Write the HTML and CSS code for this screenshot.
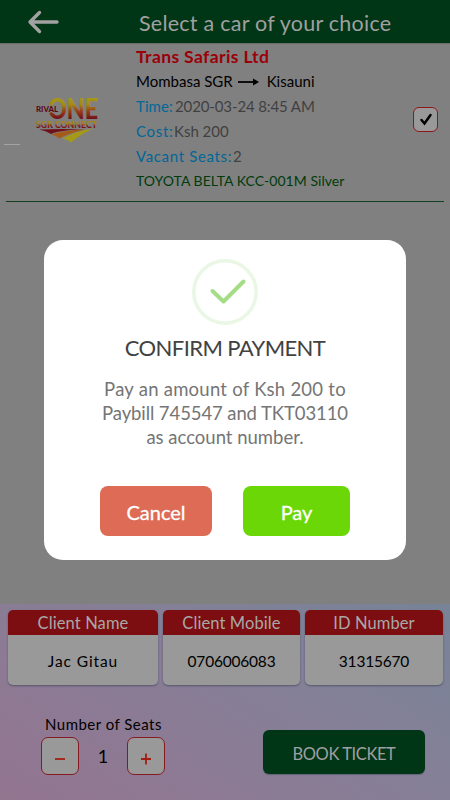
FILE: index.html
```html
<!DOCTYPE html>
<html lang="en">
<head>
<meta charset="utf-8">
<title>Select a car of your choice</title>
<link rel="stylesheet" href="styles.css">
</head>
<body>
<div class="screen">
  <header class="topbar">
    <svg class="back" width="34" height="24" viewBox="0 0 34 24"><path d="M4 12H30M12.500 2.500L3 12L12.500 21.500" /></svg>
    <h1>Select a car of your choice</h1>
  </header>
  <main class="list">
    <article class="trip">
      <div class="brand">
        <svg class="logo" width="66" height="50" viewBox="0 0 66 50">
          <defs>
            <linearGradient id="one" gradientUnits="userSpaceOnUse" x1="0" y1="2" x2="0" y2="24"><stop offset="0" stop-color="#a59a18"/><stop offset=".35" stop-color="#a58b14"/><stop offset=".62" stop-color="#9b4315"/><stop offset="1" stop-color="#701018"/></linearGradient>
            <linearGradient id="sgr" gradientUnits="userSpaceOnUse" x1="0" y1="25" x2="0" y2="33"><stop offset="0" stop-color="#a58b14"/><stop offset=".5" stop-color="#a57b14"/><stop offset=".65" stop-color="#8c2d16"/><stop offset="1" stop-color="#701018"/></linearGradient>
          </defs>
          <text class="logo-one" x="14" y="23.500" textLength="50" lengthAdjust="spacingAndGlyphs" fill="url(#one)">ONE</text>
          <text class="logo-rival" x="2" y="17" textLength="22" lengthAdjust="spacingAndGlyphs">RIVAL</text>
          <text class="logo-sgr" x="2" y="32.500" textLength="61" lengthAdjust="spacingAndGlyphs" fill="url(#sgr)">SGR CONNECT</text>
          <path fill="#701018" d="M5 34.500Q27 33.500 51 34.500Q25 35 17 39Q12 35.500 5 34.500Z"/>
          <path fill="#a45a18" d="M17 39.500Q34 34.500 52 34.500Q38 37 25 43.500Q23 41 17 39.500Z"/>
          <path fill="#a59a18" d="M28 44Q40 36.500 59 33.500Q47 39 37 47.500Q34 44 28 44Z"/>
        </svg>
        <span class="dash"></span>
      </div>
      <div class="info">
        <p class="company">Trans Safaris Ltd</p>
        <p class="route"><span>Mombasa SGR</span><svg class="arrow" width="21" height="8" viewBox="0 0 21 8"><path d="M0 4H17" stroke="#000" stroke-width="1.800"/><path d="M15 .5L21 4L15 7.500Z"/></svg><span>Kisauni</span></p>
        <p class="row"><b class="t-time">Time:</b><span class="t-date">2020-03-24 8:45 AM</span></p>
        <p class="row"><b class="t-cost">Cost:</b><span class="t-ksh">Ksh 200</span></p>
        <p class="row"><b class="t-vacant">Vacant Seats:</b><span class="t-two">2</span></p>
        <p class="car">TOYOTA BELTA KCC-001M Silver</p>
      </div>
      <div class="check"><svg width="14" height="14" viewBox="0 0 14 14"><path d="M2.500 7L5.500 10.500L11.500 2"/></svg></div>
    </article>
  </main>
  <footer class="booking">
    <div class="cards">
      <section class="card"><h2>Client Name</h2><p class="t-jac">Jac Gitau</p></section>
      <section class="card"><h2 class="t-mobile">Client Mobile</h2><p class="t-phone">0706006083</p></section>
      <section class="card"><h2>ID Number</h2><p class="t-idnum">31315670</p></section>
    </div>
    <div class="actions">
      <div class="seats">
        <p class="seats-label">Number of Seats</p>
        <div class="stepper">
          <button class="step"><svg width="12" height="12" viewBox="0 0 12 12"><path d="M1 6H11"/></svg></button>
          <span class="count">1</span>
          <button class="step"><svg width="12" height="12" viewBox="0 0 12 12"><path d="M1 6H11M6 .5V11.500"/></svg></button>
        </div>
      </div>
      <button class="book">BOOK TICKET</button>
    </div>
  </footer>
  <div class="dialog">
    <svg class="success" width="66" height="66" viewBox="0 0 66 66"><circle cx="33" cy="33" r="31.200"/><path d="M20.500 32L31.500 42.500L51.500 22.500"/></svg>
    <h3>CONFIRM PAYMENT</h3>
    <p class="message"><span class="t-m1">Pay an amount of Ksh 200 to</span><br><span class="t-m2">Paybill 745547 and TKT03110</span><br><span class="t-m3">as account number.</span></p>
    <div class="buttons">
      <button class="cancel">Cancel</button>
      <button class="pay">Pay</button>
    </div>
  </div>
</div>
</body>
</html>
```
FILE: styles.css
```css
* { box-sizing: border-box; margin: 0; padding: 0; }
body { width: 450px; height: 800px; overflow: hidden; font-family: Lato, "Open Sans", sans-serif; background: #808080; }
button { font: inherit; border: 0; display: flex; align-items: center; justify-content: center; }
span, b { white-space: nowrap; }
svg { display: block; flex: none; overflow: visible; }
.screen { position: relative; width: 450px; height: 800px; display: flex; flex-direction: column; }
.topbar { height: 43px; background: #003516; display: flex; align-items: center; padding-left: 27px; box-shadow: 0 1px 1px #6d6d6d; }
.back { fill: none; stroke: #a2a2a2; stroke-width: 3.4; stroke-linecap: round; stroke-linejoin: round; }
h1 { font-size: 21.5px; font-weight: 400; letter-spacing: .24px; color: #a0a0a0; margin-left: 78px; line-height: 43px; padding-top: 3px; }
.list { flex: 1; padding: 0 6px; }
.trip { display: flex; height: 159px; border-bottom: 1px solid #123f1f; }
.brand { width: 130px; padding: 52px 0 0 28px; position: relative; }
.dash { position: absolute; left: -2px; top: 101px; width: 16px; height: 1px; background: #a4a4a4; }
.logo-one { font: 900 29px Lato, sans-serif; }
.logo-rival { font: 900 7.6px Lato, sans-serif; fill: #5c0812; stroke: #808080; stroke-width: 2px; paint-order: stroke; }
.logo-sgr { font: 900 9.8px Lato, sans-serif; }
.info { width: 270px; font-size: 15px; line-height: 25px; }
.info p { height: 25px; display: flex; align-items: center; padding-top: 2px; }
.info b { font-weight: 400; color: #006797; }
.row { color: #404040; }
.row span { margin-left: 3px; }
.t-date { letter-spacing: -.12px; }
.t-time, .t-cost { width: 36px; letter-spacing: .1px; }
.t-cost { letter-spacing: .7px; }
.info .t-cost + .t-ksh { margin-left: 2px; }
.t-vacant { letter-spacing: .65px; }
.info .t-two { margin-left: 1px; }
.info .company { padding-top: 1px; font-size: 17.5px; letter-spacing: .38px; font-weight: 700; color: #9b0008; }
.route { color: #000; }
.arrow { margin: 0 8px 0 5px; }
.info .car { color: #003b0c; font-size: 14px; letter-spacing: .04px; padding-top: 0; }
.check { width: 25px; height: 25px; margin: 64px 0 0 7px; border: 1px solid #8e171b; border-radius: 6px; background: #999; display: flex; align-items: center; justify-content: center; }
.check path { fill: none; stroke: #000; stroke-width: 2.5; stroke-linecap: round; }
.booking { height: 196px; padding: 6px 7px 0 8px; background: linear-gradient(32deg, #937590 0%, #8d7a94 30%, #848097 62%, #778397 100%); }
.cards { display: grid; grid-template-columns: 150px 137px 138px; gap: 5px; }
.card { height: 75px; background: #999; border-radius: 5px; overflow: hidden; text-align: center; box-shadow: 0 1px 2px #55556b; }
.card h2 { height: 25px; line-height: 27px; background: #7c0d10; color: #a8a8a8; font-size: 16.5px; font-weight: 400; letter-spacing: .1px; }
.card p { line-height: 52px; font-size: 15.5px; color: #000; }
.card .t-jac { letter-spacing: .9px; }
.card .t-phone, .card .t-idnum { letter-spacing: -.2px; }
.actions { display: flex; justify-content: space-between; padding: 30px 18px 0 33px; }
.seats-label { height: 22px; line-height: 19px; padding-left: 4px; font-size: 15px; letter-spacing: .48px; color: #000; }
.stepper { display: flex; align-items: center; }
.step { width: 38px; height: 38px; border: 1px solid #861a21; border-radius: 7px; background: #999; padding-top: 5px; }
.step path { stroke: #a41d10; stroke-width: 1.8; fill: none; }
.count { width: 48px; text-align: center; font-size: 18px; }
.book { width: 162px; height: 44px; margin-top: 15px; border-radius: 6px; background: #003516; color: #a0a0a0; font-size: 16.5px; letter-spacing: -.4px; box-shadow: 0 1px 1px #626478; padding-top: 3px; }
.dialog { position: absolute; left: 44px; top: 240px; width: 362px; height: 320px; border-radius: 19px; background: #fff; padding-top: 19px; display: flex; flex-direction: column; align-items: center; }
.success { fill: none; }
.success circle { stroke: #eaf7e4; stroke-width: 3.5; }
.success path { stroke: #a5dc86; stroke-width: 4; stroke-linecap: round; stroke-linejoin: round; }
h3 { margin-top: 9px; height: 28px; line-height: 28px; font-size: 22px; font-weight: 400; letter-spacing: -.6px; color: #424242; }
.message { margin-top: 15px; font-size: 18.5px; line-height: 24px; text-align: center; color: #757575; }
.t-m1 { letter-spacing: .25px; }
.t-m2 { letter-spacing: -.1px; }
.buttons { margin-top: 37px; width: 362px; padding-left: 56px; display: flex; gap: 31px; }
.buttons button { height: 50px; border-radius: 8px; color: #fff; font-size: 20px; -webkit-text-stroke: .3px #fff; padding-top: 1px; }
.cancel { width: 112px; background: #de6b55; }
.pay { width: 107px; background: #6bd706; }
```
